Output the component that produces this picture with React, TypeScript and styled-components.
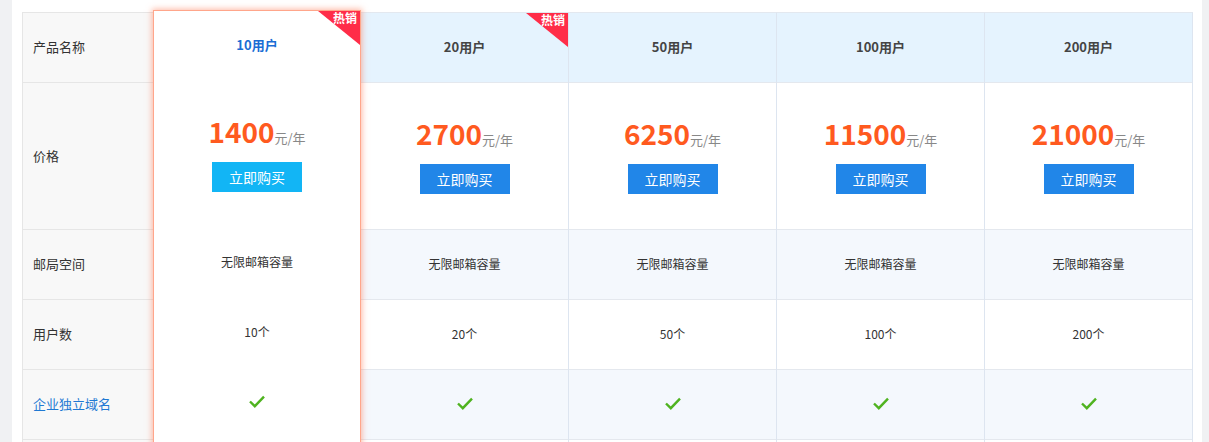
import React from 'react';
import styled, { createGlobalStyle } from 'styled-components';

const plans = [
  { users: 10, price: 1400, hot: true, featured: true },
  { users: 20, price: 2700, hot: true, featured: false },
  { users: 50, price: 6250, hot: false, featured: false },
  { users: 100, price: 11500, hot: false, featured: false },
  { users: 200, price: 21000, hot: false, featured: false },
];

const labels = ['产品名称', '价格', '邮局空间', '用户数', '企业独立域名', ''];

export default function App() {
  return (
    <>
      <GlobalStyle />
      <Panel>
        <Table>
          <LabelColumn>
            {labels.map((label, i) => (
              <LabelCell key={i} tall={i === 1} link={i === 4}>
                {label}
              </LabelCell>
            ))}
          </LabelColumn>
          {plans.map((plan) => (
            <PlanColumn key={plan.users} featured={plan.featured}>
              <HeadCell featured={plan.featured}>
                {plan.users}用户
                {plan.hot && <HotBadge>热销</HotBadge>}
              </HeadCell>
              <PriceCell featured={plan.featured}>
                <Price>
                  <Amount>{plan.price}</Amount>
                  <Unit>元/年</Unit>
                </Price>
                <BuyButton featured={plan.featured}>立即购买</BuyButton>
              </PriceCell>
              <Cell featured={plan.featured} shaded>无限邮箱容量</Cell>
              <Cell featured={plan.featured}>{plan.users}个</Cell>
              <Cell featured={plan.featured} shaded>
                <Check />
              </Cell>
              <Cell featured={plan.featured} />
            </PlanColumn>
          ))}
        </Table>
      </Panel>
    </>
  );
}

function Check() {
  return (
    <svg width="16" height="13" viewBox="0 0 16 13">
      <path d="M1 6.5 L5.8 11.2 L15 1.6" fill="none" stroke="#4fb320" strokeWidth="2.4" />
    </svg>
  );
}

const GlobalStyle = createGlobalStyle`
  html, body {
    margin: 0;
    overflow: hidden;
    background: #f0f1f3;
    font-family: "Noto Sans CJK SC", "Noto Sans", sans-serif;
    color: #333;
  }
`;

const Panel = styled.div`
  margin-left: 12px;
  width: 1190px;
  height: 442px;
  box-sizing: border-box;
  padding: 12px 10px 0 10px;
  background: #fff;
`;

const Table = styled.div`
  display: flex;
  align-items: flex-start;
`;

const LabelColumn = styled.div`
  width: 131px;
  flex: none;
  box-sizing: border-box;
  border-left: 1px solid #e6e6e6;
  border-top: 1px solid #e6e6e6;
  background: #f8f8f8;
`;

const LabelCell = styled.div<{ tall?: boolean; link?: boolean }>`
  height: ${(p) => (p.tall ? 147 : 70)}px;
  box-sizing: border-box;
  border-bottom: 1px solid #e6e6e6;
  display: flex;
  align-items: center;
  padding: 0 0 2px 10px;
  font-size: 13px;
  color: ${(p) => (p.link ? '#1f79d3' : '#333')};
`;

const PlanColumn = styled.div<{ featured?: boolean }>`
  width: 208px;
  flex: none;
  box-sizing: border-box;
  position: relative;
  background: #fff;
  border-top: 1px solid ${(p) => (p.featured ? '#ffa68b' : '#e3e8ef')};
  border-right: 1px solid ${(p) => (p.featured ? '#ffa68b' : '#dde5f0')};
  border-left: ${(p) => (p.featured ? '1px solid #ffa68b' : 'none')};
  margin-top: ${(p) => (p.featured ? '-2px' : '0')};
  box-shadow: ${(p) => (p.featured ? '0 0 6px 1px rgba(255, 115, 75, 0.5)' : 'none')};
  z-index: ${(p) => (p.featured ? 2 : 1)};
`;

const Cell = styled.div<{ featured?: boolean; shaded?: boolean }>`
  height: 70px;
  box-sizing: border-box;
  display: flex;
  align-items: center;
  justify-content: center;
  padding-bottom: 2px;
  font-size: 12px;
  color: #333;
  background: ${(p) => (p.shaded && !p.featured ? '#f4f8fd' : '#fff')};
  border-bottom: 1px solid ${(p) => (p.featured ? 'transparent' : '#e4e8ee')};
`;

const HeadCell = styled(Cell)`
  position: relative;
  font-size: 13px;
  font-weight: bold;
  color: ${(p) => (p.featured ? '#1a6dd4' : '#444')};
  background: ${(p) => (p.featured ? '#fff' : '#e5f3fe')};
`;

const HotBadge = styled.span`
  position: absolute;
  top: 0;
  right: 0;
  width: 42px;
  height: 34px;
  background: #ff2d48;
  clip-path: polygon(0 0, 100% 0, 100% 100%);
  color: #fff;
  font-size: 12px;
  font-weight: bold;
  line-height: 14px;
  text-align: right;
  padding-right: 3px;
  box-sizing: border-box;
`;

const PriceCell = styled(Cell)`
  height: 147px;
  flex-direction: column;
  padding-bottom: 3px;
`;

const Price = styled.div`
  display: flex;
  align-items: baseline;
  line-height: 34px;
  margin-bottom: 7px;
`;

const Amount = styled.span`
  font-size: 28px;
  font-weight: bold;
  color: #ff5a1f;
`;

const Unit = styled.span`
  font-size: 13px;
  color: #888;
`;

const BuyButton = styled.button<{ featured?: boolean }>`
  width: 90px;
  height: 30px;
  border: none;
  padding: 0;
  background: ${(p) => (p.featured ? '#12b5f5' : '#2186e8')};
  color: #fff;
  font-family: inherit;
  font-size: 14px;
  cursor: pointer;
`;
